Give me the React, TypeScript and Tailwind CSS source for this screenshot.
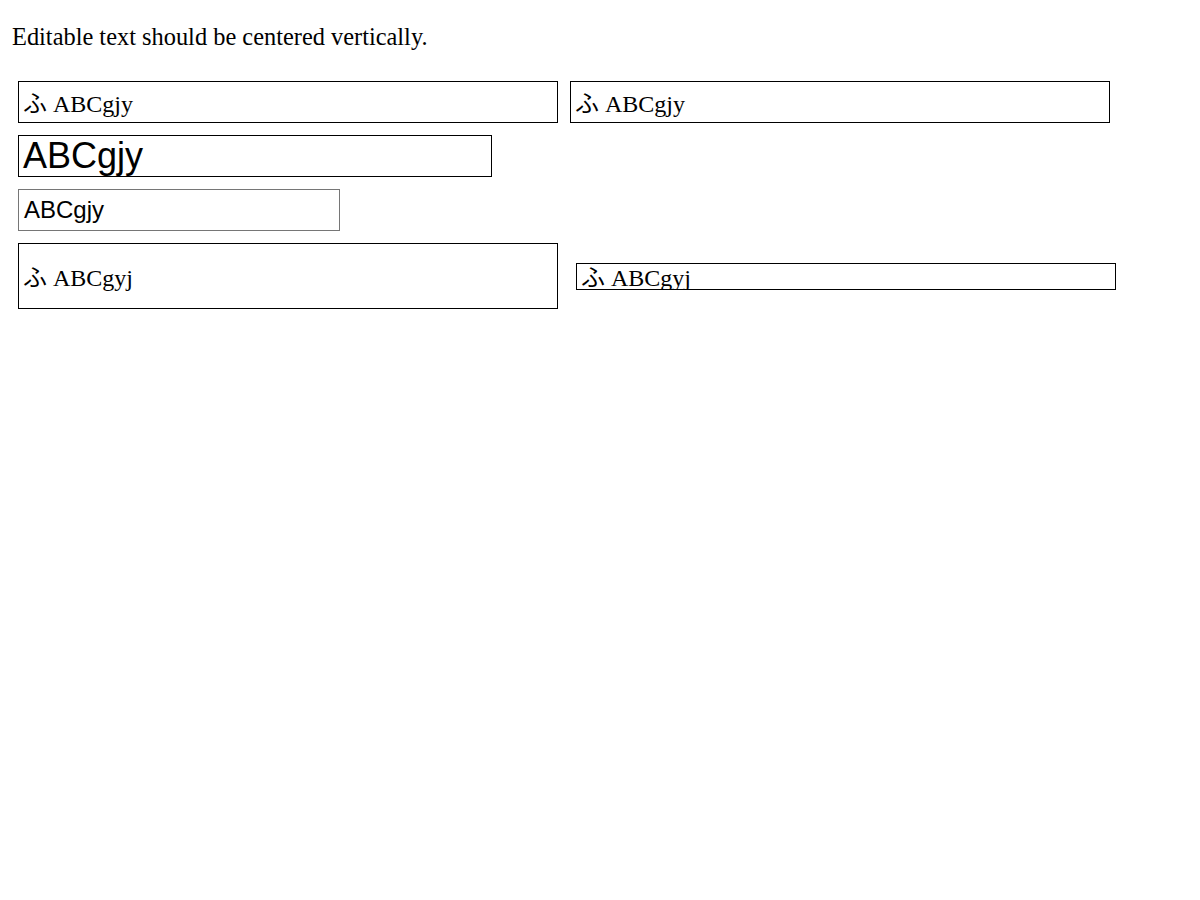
const serif = "font-['Liberation_Serif','Noto_Sans_CJK_JP',serif]";
const sans = "font-['Liberation_Sans','Noto_Sans_CJK_JP',sans-serif]";

function Field({ className, children }: { className: string; children: React.ReactNode }) {
  return (
    <div className={`flex items-center overflow-hidden whitespace-nowrap text-black ${className}`}>
      {children}
    </div>
  );
}

export default function App() {
  return (
    <div className="min-h-[900px] bg-white pt-[23px] text-black">
      <p className={`${serif} h-[28px] pl-[12px] text-[24.4px] leading-[28px]`}>
        Editable text should be centered vertically.
      </p>

      <div className="mt-[30px] flex flex-col gap-[12px] pl-[18px]">
        {/* same size, two fields */}
        <div className="flex gap-[12px]">
          <Field className={`${serif} h-[42px] w-[540px] border border-black pl-[4px] pt-[3px] text-[24px]`}>ふ ABCgjy</Field>
          <Field className={`${serif} h-[42px] w-[540px] border border-black pl-[4px] pt-[3px] text-[24px]`}>ふ ABCgjy</Field>
        </div>

        {/* large sans */}
        <Field className={`${sans} h-[42px] w-[474px] border border-black pl-[4px] text-[36px]`}>ABCgjy</Field>

        {/* plain input look */}
        <Field className={`${sans} h-[42px] w-[322px] border border-[#767676] pl-[5px] text-[24px]`}>ABCgjy</Field>

        {/* tall field next to a short one */}
        <div className="flex items-start gap-[18px]">
          <Field className={`${serif} h-[66px] w-[540px] border border-black pl-[4px] pt-[3px] text-[24px]`}>ふ ABCgyj</Field>
          <div
            className={`${serif} mt-[20px] h-[27px] w-[540px] overflow-hidden whitespace-nowrap border border-black pl-[4px] text-[24px]`}
          >
            <div className="mt-[-4px]">ふ ABCgyj</div>
          </div>
        </div>
      </div>
    </div>
  );
}
